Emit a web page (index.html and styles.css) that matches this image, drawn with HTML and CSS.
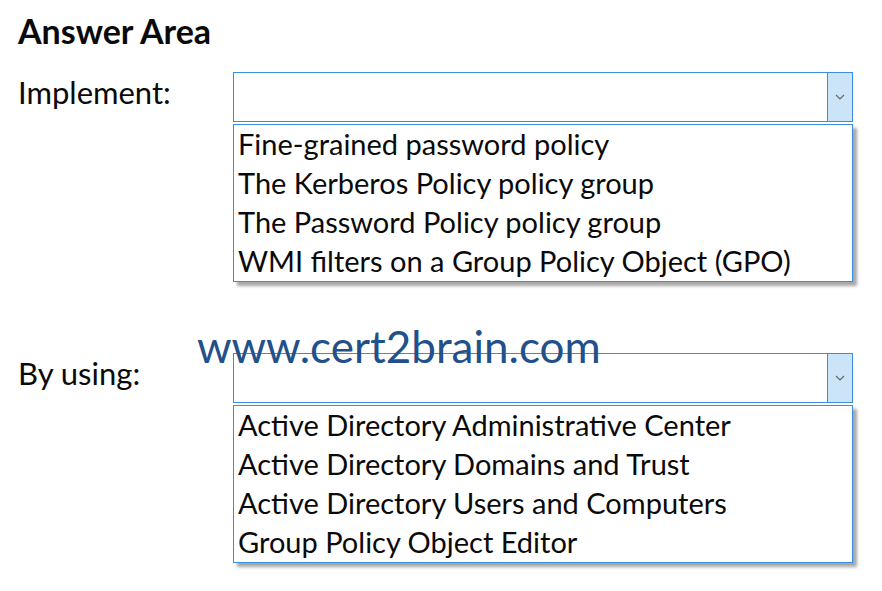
FILE: index.html
```html
<!DOCTYPE html>
<html lang="en">
<head>
  <meta charset="UTF-8">
  <title>Answer Area</title>
  <link rel="stylesheet" href="styles.css">
</head>
<body>

<div class="page">
  <h1>Answer Area</h1>

  <div class="row">
    <div class="label">Implement:</div>
    <div class="field">
      <div class="combo">
        <div class="value"></div>
        <div class="arrow">
          <svg width="10" height="6" viewBox="0 0 10 6"><path d="M1 1 L5 5 L9 1" fill="none" stroke="#666" stroke-width="1.2"/></svg>
        </div>
      </div>
      <ul class="options">
        <li>Fine-grained password policy</li>
        <li>The Kerberos Policy policy group</li>
        <li>The Password Policy policy group</li>
        <li>WMI filters on a Group Policy Object (GPO)</li>
      </ul>
    </div>
  </div>

  <div class="row second">
    <div class="label">By using:</div>
    <div class="field">
      <div class="combo">
        <div class="value"></div>
        <div class="arrow">
          <svg width="10" height="6" viewBox="0 0 10 6"><path d="M1 1 L5 5 L9 1" fill="none" stroke="#666" stroke-width="1.2"/></svg>
        </div>
      </div>
      <ul class="options">
        <li>Active Directory Administrative Center</li>
        <li>Active Directory Domains and Trust</li>
        <li>Active Directory Users and Computers</li>
        <li>Group Policy Object Editor</li>
      </ul>
    </div>
  </div>

  <div class="mark">www.cert2brain.com</div>
</div>

</body>
</html>
```

FILE: styles.css
```css
body { margin: 0; background: #fff; font-family: Lato, "Open Sans", sans-serif; color: #0a0a0a; }
.page { position: relative; width: 882px; height: 591px; padding: 0 0 0 18px; box-sizing: border-box; }
h1 { margin: 0; padding-top: 14px; font-size: 34px; line-height: 34px; font-weight: bold; }
.row { display: flex; margin-top: 24px; }
.row.second { margin-top: 71px; }
.label { width: 215px; font-size: 31px; line-height: 40px; }
.field { width: 620px; }
.combo { display: flex; height: 50px; border: 1px solid #3a8ee0; box-sizing: border-box; background: #fff; }
.value { flex: 1; }
.arrow { width: 24px; display: flex; align-items: center; justify-content: center; background: #cce4f7; border-left: 1px solid #3a8ee0; }
.options { list-style: none; margin: 2px 0 0; padding: 1px 0 0 4px; height: 158px; box-sizing: border-box; border: 1px solid #3a8ee0; background: #fff; box-shadow: 4px 4px 3px rgba(0,0,0,0.35); }
.options li { font-size: 29px; line-height: 35px; padding-bottom: 4px; white-space: nowrap; }
.mark { position: absolute; left: 197px; top: 321px; font-size: 44px; line-height: 50px; color: #22508a; }
```
